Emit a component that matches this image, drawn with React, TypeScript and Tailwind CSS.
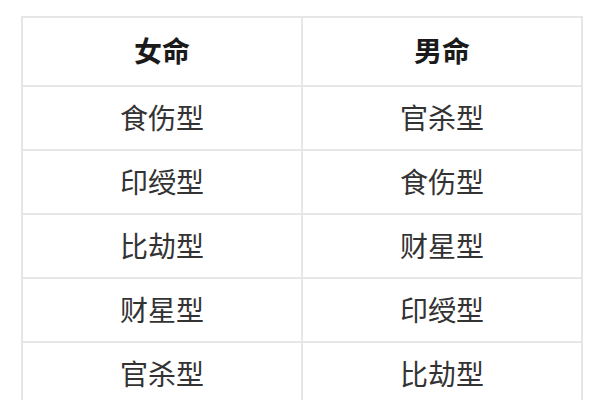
const rows: [string, string][] = [
  ['食伤型', '官杀型'],
  ['印绶型', '食伤型'],
  ['比劫型', '财星型'],
  ['财星型', '印绶型'],
  ['官杀型', '比劫型'],
]

export default function App() {
  return (
    <div
      className="w-[600px] h-[400px] overflow-hidden bg-white"
      style={{ fontFamily: '"Noto Sans CJK SC", "Noto Sans", sans-serif' }}
    >
      <div className="ml-[21px] mt-[16px] w-[562px] grid grid-cols-2 border-l-2 border-t-2 border-[#e6e6e6]">
        {/* Header */}
        <div className="h-[69px] pb-[3px] flex items-center justify-center border-r-2 border-b-2 border-[#e6e6e6] text-[28px] leading-none font-bold text-[#1a1a1a]">
          女命
        </div>
        <div className="h-[69px] pb-[3px] flex items-center justify-center border-r-2 border-b-2 border-[#e6e6e6] text-[28px] leading-none font-bold text-[#1a1a1a]">
          男命
        </div>

        {/* Rows */}
        {rows.map(([female, male], i) => (
          <div key={i} className="contents">
            <div className="h-[64px] pb-[3px] flex items-center justify-center border-r-2 border-b-2 border-[#e6e6e6] text-[28px] leading-none text-[#333333]">
              {female}
            </div>
            <div className="h-[64px] pb-[3px] flex items-center justify-center border-r-2 border-b-2 border-[#e6e6e6] text-[28px] leading-none text-[#333333]">
              {male}
            </div>
          </div>
        ))}
      </div>
    </div>
  )
}
